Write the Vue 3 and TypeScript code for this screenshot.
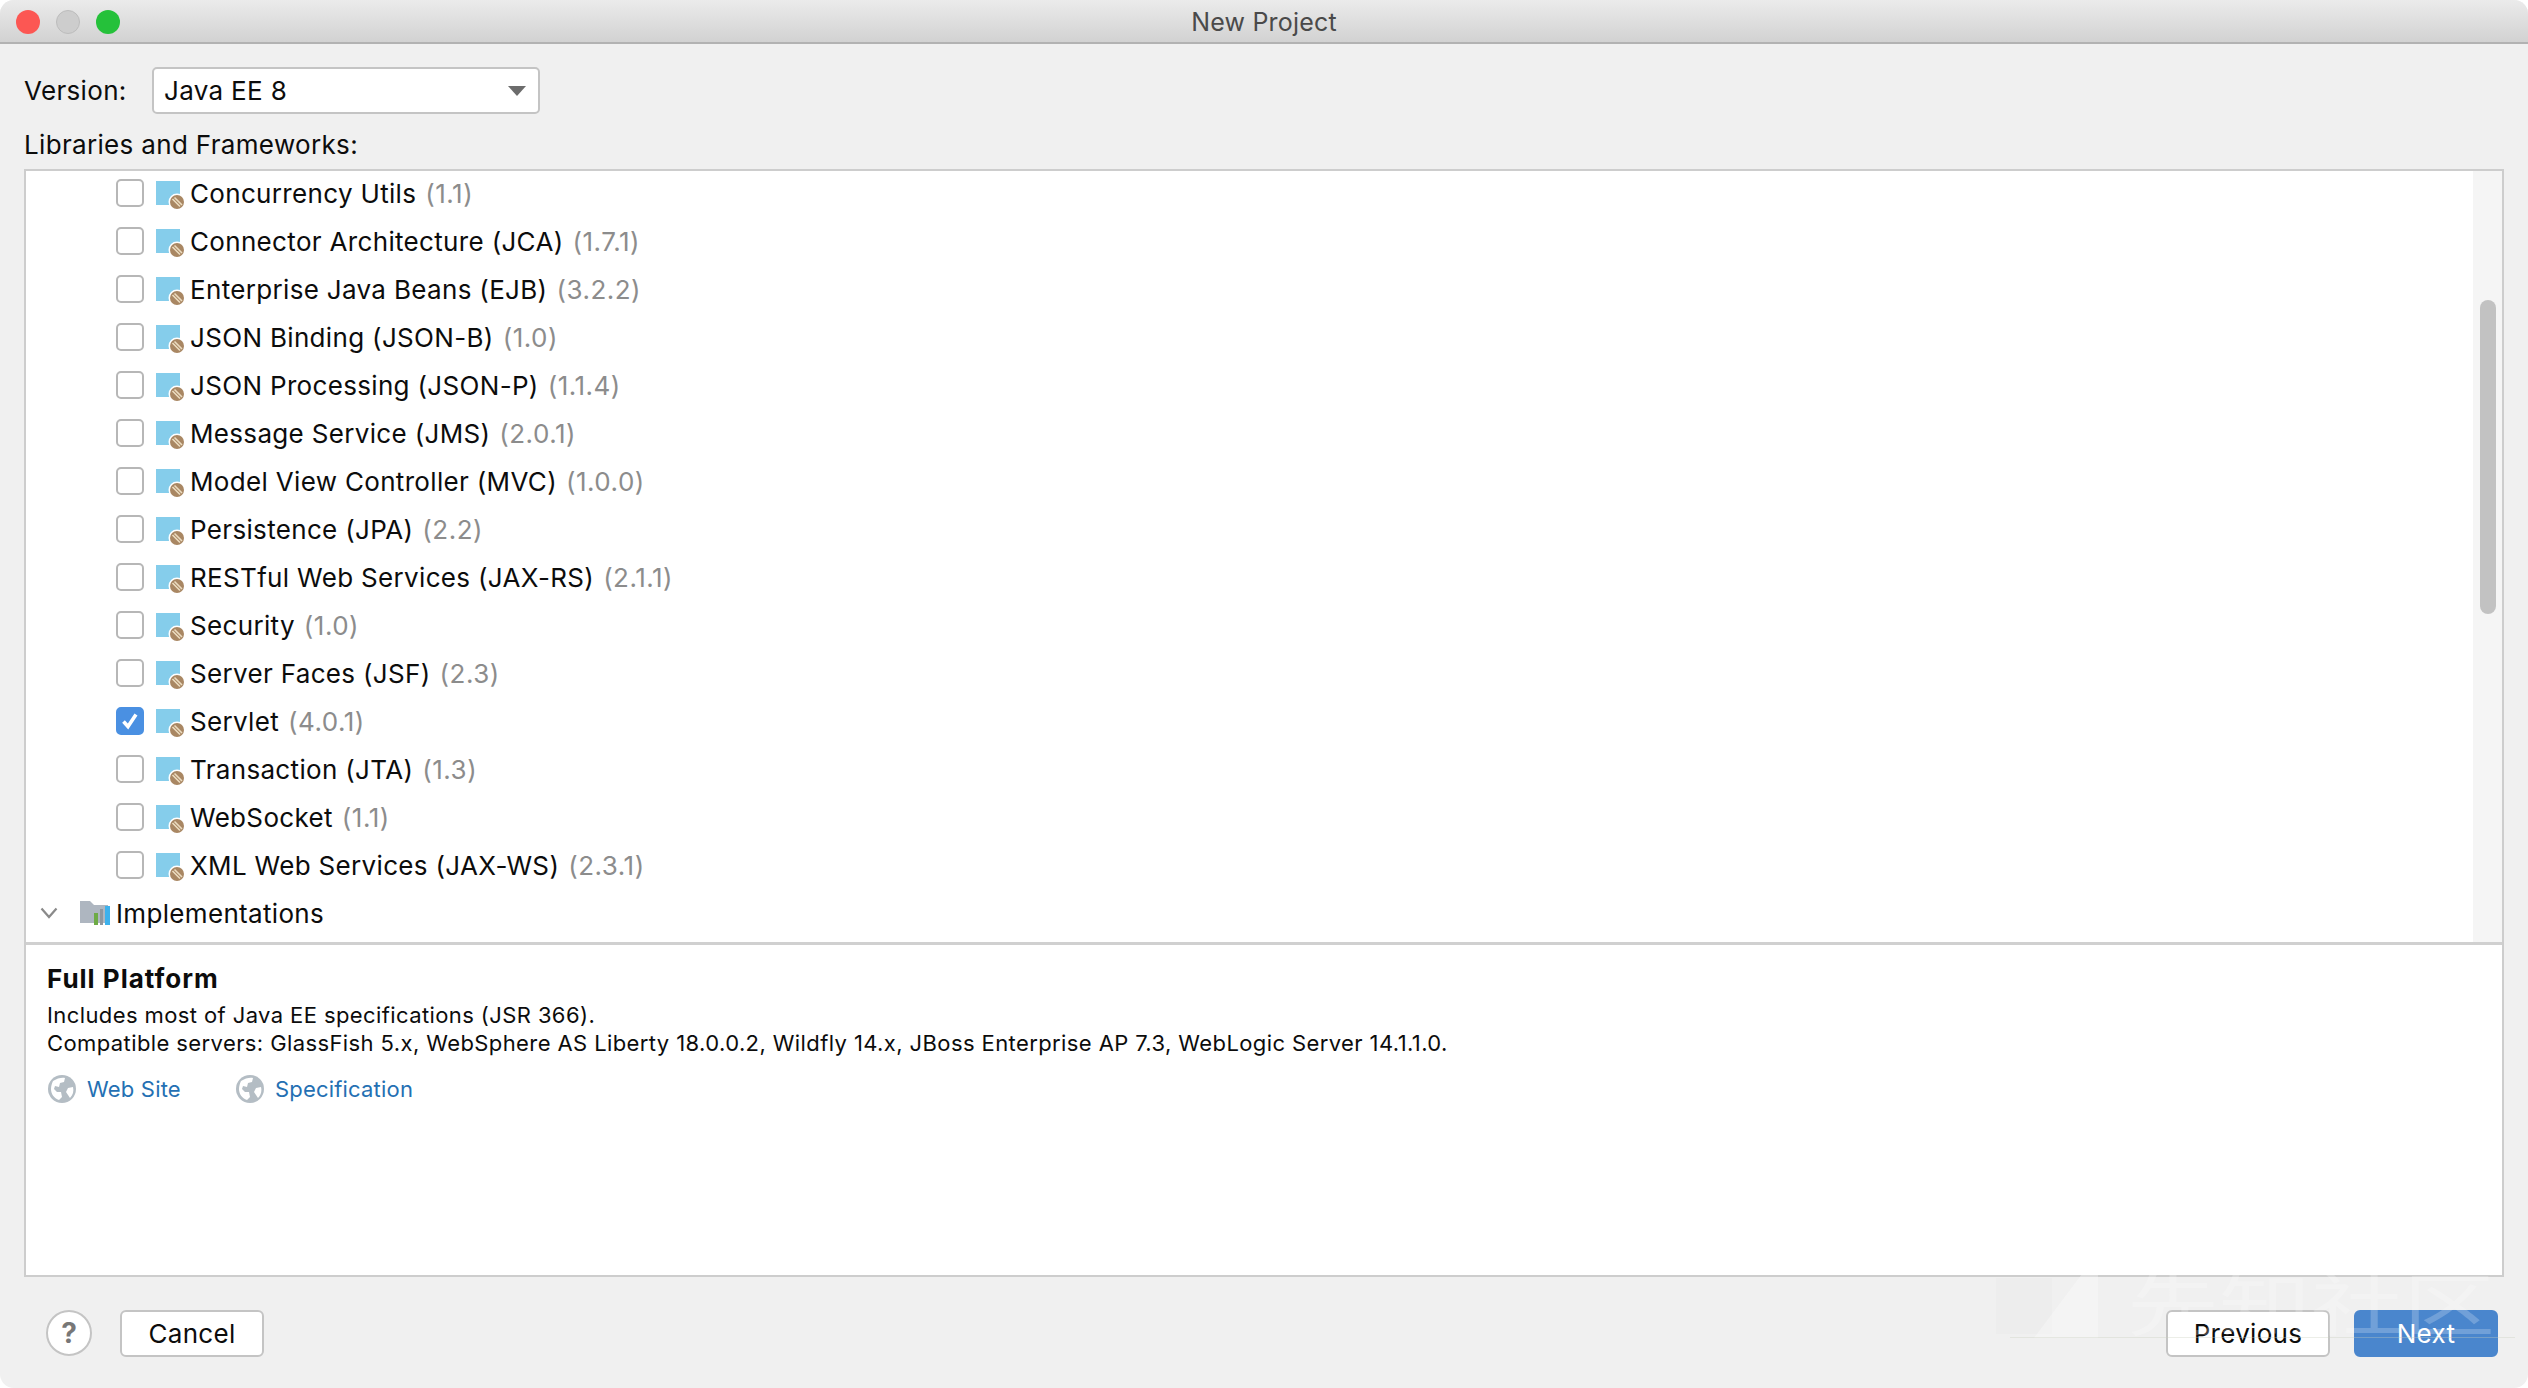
<script setup lang="ts">
interface Lib {
  name: string
  version: string
  checked?: boolean
}

const libs: Lib[] = [
  { name: 'Concurrency Utils', version: '(1.1)' },
  { name: 'Connector Architecture (JCA)', version: '(1.7.1)' },
  { name: 'Enterprise Java Beans (EJB)', version: '(3.2.2)' },
  { name: 'JSON Binding (JSON-B)', version: '(1.0)' },
  { name: 'JSON Processing (JSON-P)', version: '(1.1.4)' },
  { name: 'Message Service (JMS)', version: '(2.0.1)' },
  { name: 'Model View Controller (MVC)', version: '(1.0.0)' },
  { name: 'Persistence (JPA)', version: '(2.2)' },
  { name: 'RESTful Web Services (JAX-RS)', version: '(2.1.1)' },
  { name: 'Security', version: '(1.0)' },
  { name: 'Server Faces (JSF)', version: '(2.3)' },
  { name: 'Servlet', version: '(4.0.1)', checked: true },
  { name: 'Transaction (JTA)', version: '(1.3)' },
  { name: 'WebSocket', version: '(1.1)' },
  { name: 'XML Web Services (JAX-WS)', version: '(2.3.1)' }
]

const links = ['Web Site', 'Specification']
</script>

<template>
  <div class="window">
    <header class="titlebar">
      <div class="lights">
        <span class="light red"></span>
        <span class="light grey"></span>
        <span class="light green"></span>
      </div>
      <span class="title">New Project</span>
    </header>

    <div class="version-row">
      <label class="label version-label">Version:</label>
      <div class="select">
        <span>Java EE 8</span>
        <span class="arrow"></span>
      </div>
    </div>

    <div class="label libs-label">Libraries and Frameworks:</div>

    <div class="panel">
      <div class="tree-wrap">
        <div class="tree">
          <div v-for="lib in libs" :key="lib.name" class="row">
            <span class="check" :class="{ on: lib.checked }">
              <svg v-if="lib.checked" width="22" height="22" viewBox="0 0 22 22">
                <path d="M4.5 11.5 L9 16.5 L17 4.5" fill="none" stroke="#fff" stroke-width="3.6" />
              </svg>
            </span>
            <svg class="lib-icon" width="28" height="28" viewBox="0 0 28 28">
              <rect x="0" y="0" width="24" height="24" fill="#85cdeb" />
              <circle cx="21" cy="21" r="8.5" fill="#fff" />
              <circle cx="21" cy="21" r="7" fill="#a98763" />
              <path d="M16.5 18 L24 25.5 M18.5 16.5 L26 24" stroke="#ecdcc0" stroke-width="1.6" />
            </svg>
            <span class="name">{{ lib.name }}</span>
            <span class="ver">{{ lib.version }}</span>
          </div>
          <div class="row group">
            <svg class="chevron" width="18" height="12" viewBox="0 0 18 12">
              <path d="M1.5 1.5 L9 10 L16.5 1.5" fill="none" stroke="#8a8a8a" stroke-width="2.2" />
            </svg>
            <svg class="folder" width="30" height="24" viewBox="0 0 30 24">
              <path d="M0 0 H10 L14 4 H28 V22 H0 Z" fill="#aeb6c0" />
              <rect x="14" y="12" width="4" height="12" fill="#6eab46" />
              <rect x="20" y="8" width="3" height="16" fill="#8f979f" />
              <rect x="25" y="5" width="5" height="19" fill="#3db1ec" />
            </svg>
            <span class="name">Implementations</span>
          </div>
        </div>
        <div class="scrolltrack">
          <div class="thumb"></div>
        </div>
      </div>

      <div class="details">
        <h3 class="heading">Full Platform</h3>
        <p class="desc">Includes most of Java EE specifications (JSR 366).</p>
        <p class="desc">Compatible servers: GlassFish 5.x, WebSphere AS Liberty 18.0.0.2, Wildfly 14.x, JBoss Enterprise AP 7.3, WebLogic Server 14.1.1.0.</p>
        <div class="links">
          <a v-for="link in links" :key="link" class="link">
            <svg width="28" height="28" viewBox="0 0 28 28">
              <circle cx="14" cy="14" r="14" fill="#b4bdc4" />
              <path d="M5 6 C9 3 15 2 17 3 L16 7 L12 8 L11 12 L7 11 L6 14 L9 17 L13 17 L14 22 L11 25 C6 23 3 19 3 14 C3 11 4 8 5 6 Z M20 13 L25 12 C26 16 25 20 22 23 L20 20 L18 17 Z" fill="#fff" />
            </svg>
            <span>{{ link }}</span>
          </a>
        </div>
      </div>
    </div>

    <footer class="footer">
      <button class="help">?</button>
      <button class="btn cancel">Cancel</button>
      <div class="spacer"></div>
      <button class="btn prev">Previous</button>
      <button class="btn primary">Next</button>
    </footer>

    <!-- faint site watermark sitting over the dialog -->
    <svg class="wm-logo" width="110" height="84" viewBox="0 0 110 84">
      <rect x="2" y="20" width="56" height="56" fill="#000" opacity="0.012" />
      <path d="M100 0 H104 V80 H40 Z" fill="#fff" opacity="0.3" />
    </svg>
    <div class="wm-line"></div>
    <div class="watermark">先知社区</div>
  </div>
</template>

<style scoped>
.window {
  position: relative;
  width: 2528px;
  height: 1388px;
  background: #f0f0f0;
  border-radius: 14px;
  overflow: hidden;
  font-family: Inter, "Noto Sans CJK SC", sans-serif;
  font-size: 26px;
  letter-spacing: 0.33px;
  color: #0c0c0c;
  display: flex;
  flex-direction: column;
}

.titlebar {
  height: 44px;
  flex: none;
  background: linear-gradient(#ebebeb, #d2d2d2);
  border-bottom: 2px solid #b2b2b2;
  box-sizing: border-box;
  display: flex;
  align-items: center;
  justify-content: center;
  padding-top: 2px;
  position: relative;
}

.lights {
  position: absolute;
  left: 16px;
  top: 10px;
  display: flex;
  gap: 16px;
}

.light {
  width: 24px;
  height: 24px;
  border-radius: 50%;
}

.red { background: #fc5753; }
.grey { background: #cdcdcd; border: 1px solid #bcbcbc; box-sizing: border-box; }
.green { background: #25c13a; }

.title {
  font-size: 25px;
  letter-spacing: 0.2px;
  color: #4a4a4a;
}

.version-row {
  display: flex;
  align-items: center;
  margin: 23px 0 0 24px;
}

.version-label {
  width: 128px;
}

.label {
  line-height: 30px;
}

.select {
  width: 388px;
  height: 47px;
  box-sizing: border-box;
  background: #fff;
  border: 2px solid #c4c4c4;
  border-radius: 5px;
  display: flex;
  align-items: center;
  justify-content: space-between;
  padding: 0 12px 0 10px;
}

.arrow {
  width: 0;
  height: 0;
  border-left: 9px solid transparent;
  border-right: 9px solid transparent;
  border-top: 10px solid #6c6c6c;
}

.libs-label {
  margin: 16px 0 9px 24px;
}

.panel {
  flex: none;
  width: 2480px;
  height: 1108px;
  margin-left: 24px;
  box-sizing: border-box;
  background: #fff;
  border: 2px solid #cdcdcd;
  display: flex;
  flex-direction: column;
}

.tree-wrap {
  flex: none;
  height: 771px;
  display: flex;
  border-bottom: 3px solid #d0d0d0;
  overflow: hidden;
}

.tree {
  flex: 1;
  margin-top: -2px;
}

.row {
  height: 48px;
  display: flex;
  align-items: center;
  padding-left: 90px;
  white-space: nowrap;
}

.check {
  width: 28px;
  height: 28px;
  box-sizing: border-box;
  background: #fff;
  border: 2px solid #b7b7b7;
  border-radius: 5px;
  flex: none;
  display: flex;
  align-items: center;
  justify-content: center;
}

.check.on {
  background: #4a90e2;
  border-color: #4a90e2;
}

.lib-icon {
  margin: 4px 0 0 12px;
  flex: none;
}

.name {
  margin-left: 6px;
}

.ver {
  margin-left: 9px;
  color: #8c8c8c;
  letter-spacing: 0.5px;
}

.group {
  padding-left: 14px;
}

.chevron {
  flex: none;
}

.folder {
  margin-left: 22px;
  flex: none;
}

.scrolltrack {
  width: 29px;
  flex: none;
  background: #f5f5f5;
  padding-top: 129px;
  box-sizing: border-box;
  display: flex;
  justify-content: center;
}

.thumb {
  width: 16px;
  height: 314px;
  background: #c2c2c2;
  border-radius: 8px;
}

.details {
  padding: 18px 0 0 21px;
}

.heading {
  margin: 0;
  font-size: 26px;
  letter-spacing: 1px;
  line-height: 32px;
  font-weight: 700;
}

.desc {
  margin: 0;
  font-size: 22px;
  letter-spacing: 0.4px;
  line-height: 28px;
}

.heading + .desc {
  margin-top: 6px;
}

.links {
  display: flex;
  gap: 55px;
  margin-top: 18px;
  padding-left: 1px;
}

.link {
  display: flex;
  align-items: center;
  gap: 11px;
  font-size: 22px;
  letter-spacing: 0.2px;
  color: #2470b3;
}

.footer {
  flex: 1;
  display: flex;
  align-items: flex-start;
  padding: 33px 30px 0 46px;
}

.help {
  width: 46px;
  height: 46px;
  border: 2px solid #c4c4c4;
  border-radius: 50%;
  background: #fff;
  color: #777;
  font: 700 28px Inter, sans-serif;
  padding: 0;
}

.btn {
  height: 47px;
  width: 144px;
  box-sizing: border-box;
  background: #fff;
  border: 2px solid #c4c4c4;
  border-radius: 6px;
  font: 26px Inter, sans-serif;
  letter-spacing: 0.3px;
  color: #0c0c0c;
  padding: 0;
}

.cancel {
  margin-left: 28px;
}

.spacer {
  flex: 1;
}

.prev {
  width: 164px;
}

.btn + .btn {
  margin-left: 24px;
}

.primary {
  background: #4a86cd;
  border-color: #4a86cd;
  color: #fff;
}

.wm-logo {
  position: absolute;
  left: 1994px;
  top: 1258px;
  pointer-events: none;
}

.wm-line {
  position: absolute;
  left: 2010px;
  top: 1337px;
  width: 505px;
  height: 1px;
  background: rgba(200, 205, 190, 0.35);
  pointer-events: none;
}

.watermark {
  position: absolute;
  left: 2127px;
  top: 1272px;
  font-size: 92px;
  letter-spacing: 0;
  line-height: 92px;
  color: rgba(255, 255, 255, 0.22);
  transform: scaleY(0.74);
  transform-origin: top left;
  pointer-events: none;
}
</style>

<style>
body {
  background: #fff;
}
</style>
